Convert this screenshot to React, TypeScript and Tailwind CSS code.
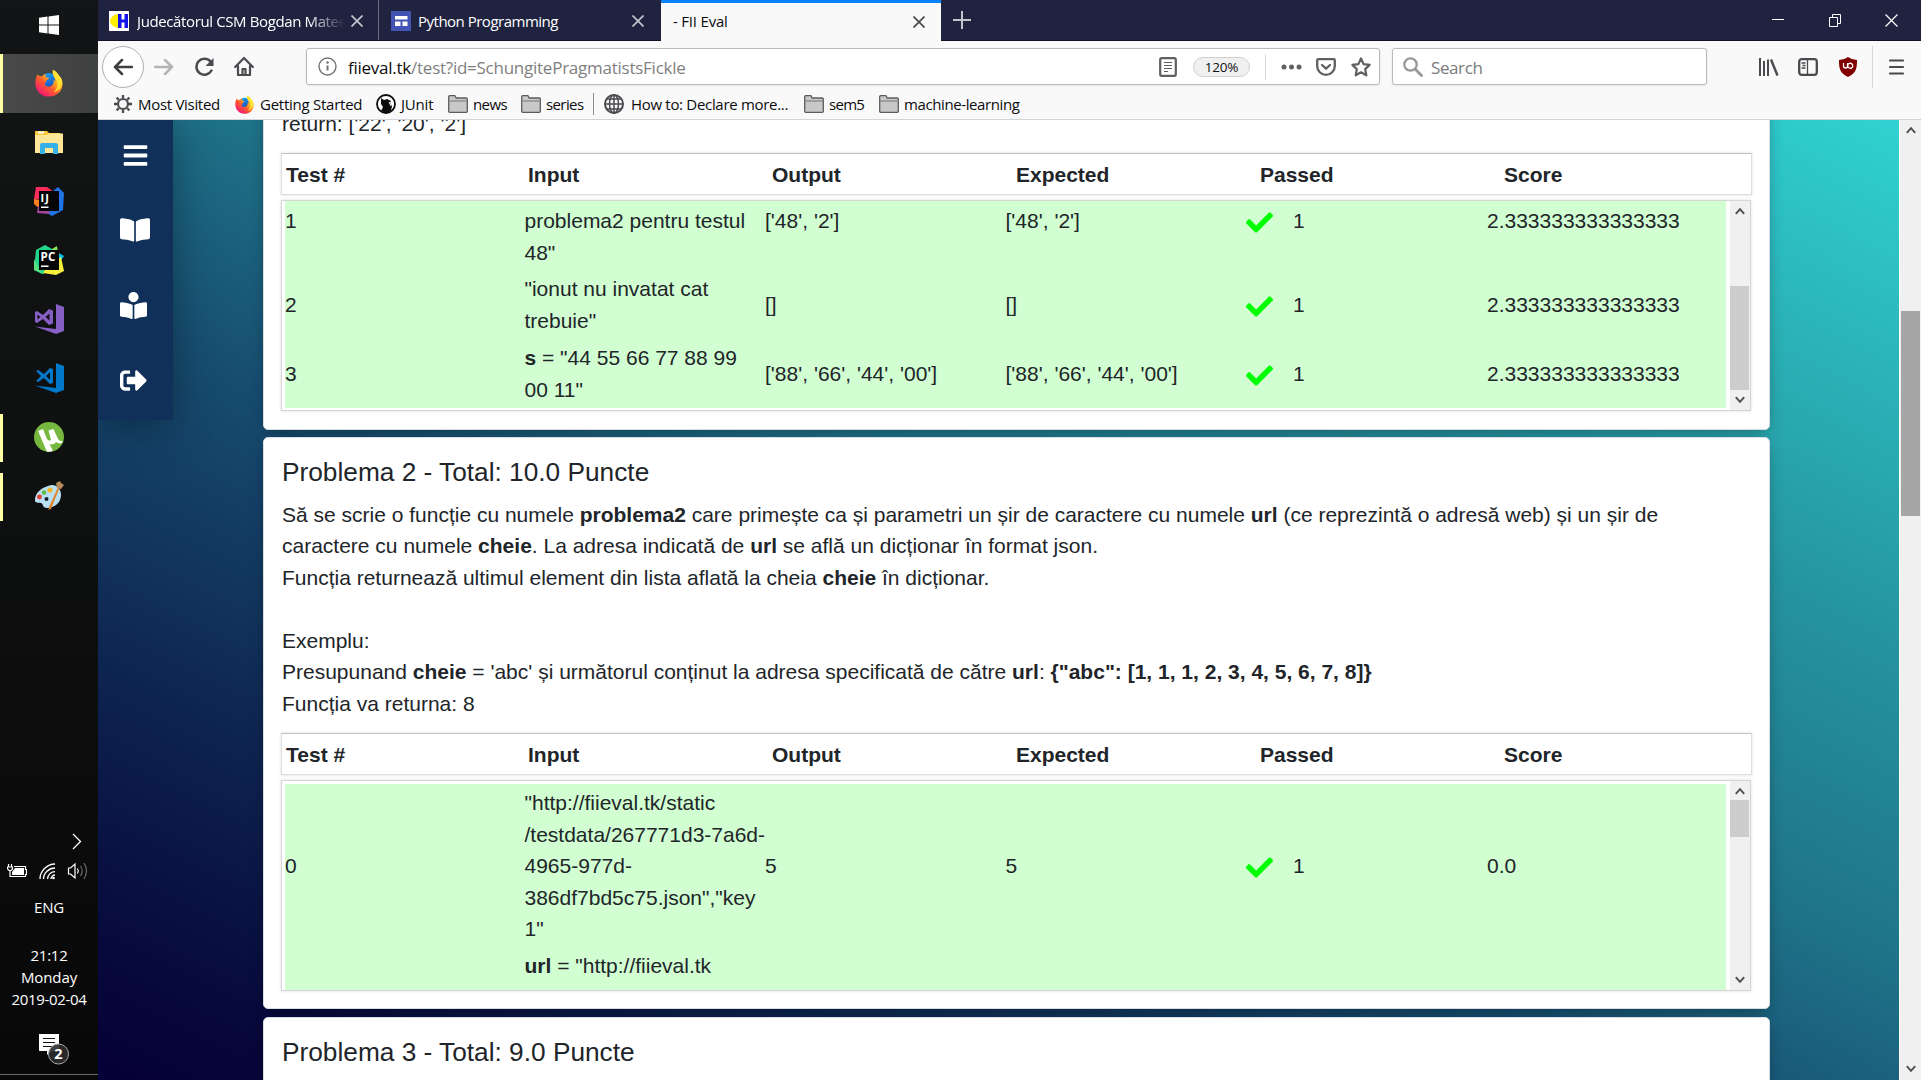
import React from "react";
import { FaBars, FaBookOpen, FaBookReader, FaSignOutAlt, FaCheck } from "react-icons/fa";

const SEGOE = "font-['Open_Sans','Noto_Sans',sans-serif]";

function Firefox({ size }: { size: number }) {
  const id = "fx" + size;
  return (
    <svg width={size} height={size} viewBox="0 0 32 32">
      <defs>
        <linearGradient id={id + "a"} x1="0.9" y1="0.1" x2="0.2" y2="0.95">
          <stop offset="0" stopColor="#fff44f" />
          <stop offset="0.35" stopColor="#ffb01f" />
          <stop offset="0.6" stopColor="#ff5a2c" />
          <stop offset="1" stopColor="#f0147a" />
        </linearGradient>
        <linearGradient id={id + "b"} x1="0.2" y1="0" x2="0.6" y2="1">
          <stop offset="0" stopColor="#1aa7f5" />
          <stop offset="1" stopColor="#1b3fb5" />
        </linearGradient>
      </defs>
      <circle cx="16" cy="15" r="10.5" fill={`url(#${id}b)`} />
      <path d="M3 6c1 2 3 2.500 5 2.500 1-1.500 2.500-2.500 4.500-3-1 1.500-1 3 .5 4l3 .8c-.2 1.600-2 2-3.200 3 .4 2-1.800 2.200-1.500 4.200.8 3 5 3.500 7.500 1.500 2.500-1.800 3-4 2.500-6.500 1 .5 1.500 1 2 2 .3-5-4-7-3-13.500C24 1.500 26 5 28 8c2.500 3 3.500 5 3.500 9.500C31 26 24.500 31.500 16 31.500 7 31.500.8 25 .5 17 .4 13 1 9 3 6z" fill={`url(#${id}a)`} />
      <path d="M23.500 10.500c4 5 2.500 13-3 16.500 8-2 11-8 10-14.500C29.500 8 23 6 20.800 1.500c-1 5 .7 6 2.700 9z" fill="#ffe535" opacity="0.85" />
    </svg>
  );
}

function Tile({ children, active, running }: { children: React.ReactNode; active?: boolean; running?: boolean }) {
  return (
    <div className={"flex h-[59px] w-full items-center " + (active ? "bg-gradient-to-r from-[#4a4a4a] to-[#3f4040]" : "")}>
      <div className={"w-[3px] " + (active ? "h-full bg-[#ffffa6]" : running ? "h-12 bg-[#ffffa6]" : "h-12")} />
      <div className="flex flex-1 justify-center pr-[3px] pb-[2px]">{children}</div>
    </div>
  );
}

function JetBrains({ label, py }: { label: string; py?: boolean }) {
  return (
    <svg width="30" height="30" viewBox="0 0 30 30">
      {py ? (
        <>
          <path d="M2 5l9-5 7 4-2 22-8 3-8-4z" fill="#21d789" />
          <path d="M18 4l5-3 1 7-8 2z" fill="#8be55a" />
          <path d="M23 7l7 4-4 6z" fill="#07c3f2" />
          <path d="M27 12l3 14-8 4-13-2 3-5z" fill="#f5f03c" />
          <path d="M0 14l6 12 5 3-11-4z" fill="#5ee07f" />
        </>
      ) : (
        <>
          <path d="M2 1h11l7 5-6 8L0 13z" fill="#fe2d5d" />
          <path d="M0 13l6 1v9l-6-5z" fill="#fc801d" />
          <path d="M19 5l5-4 6 6-1 17-11 6-8-5z" fill="#2173e8" />
          <path d="M4 20l10 3 2 5-13-1z" fill="#a0479a" />
        </>
      )}
      <rect x="5" y="5" width="20" height="20" fill="#060606" />
      <text x="6.500" y="16" fontSize={py ? 11.5 : 11} fontWeight="700" fill="#fff" fontFamily="Open Sans, sans-serif" letterSpacing={py ? 0.3 : 1.2}>{label}</text>
      <rect x="7" y="20.500" width="7.500" height="1.500" fill="#fff" />
    </svg>
  );
}

function VisualStudio({ color, code }: { color: string; code?: boolean }) {
  return (
    <svg width="30" height="30" viewBox="0 0 30 30" fill={color}>
      <path d="M22 0l8 3v24l-8 3L1 22.500l21 2.500z" />
      {code ? (
        <path fillRule="evenodd" d="M2 8l2-1 6 4 6-6 3 1v14l-3 1-6-6-6 4-2-1 5-5zM16 9l-4 4 4 4z" />
      ) : (
        <path fillRule="evenodd" d="M1 8l2-1 6 4 6-6 4 1.500v13L15 21l-6-6-6 4-2-1zM3.500 10.500v5L6.500 13zM15.500 9.500L11.500 13l4 3.500z" />
      )}
    </svg>
  );
}

function Taskbar() {
  return (
    <aside className="flex h-full w-[98px] shrink-0 flex-col items-center bg-gradient-to-b from-[#131415] via-[#0e0f0f] to-[#080808] text-white">
      <div className="flex h-[54px] items-center pb-1">
        <svg width="20" height="20" viewBox="0 0 20 20" fill="#fff">
          <path d="M0 2.800l8.500-1.200v7.900H0zM9.500 1.400L20 0v9.500H9.500zM0 10.500h8.500v7.900L0 17.200zM9.500 10.500H20V20L9.500 18.600z" />
        </svg>
      </div>
      <Tile active><Firefox size={28} /></Tile>
      <Tile>
        <svg width="28" height="24" viewBox="0 0 28 24">
          <path d="M0 1h12l2 2h11v4H0z" fill="#fcc93a" />
          <path d="M3 1.500h6v2H3z" fill="#fff" />
          <path d="M0 5h12l2-1.500h14V23H0z" fill="#ffe698" />
          <path d="M5 24V15q0-2 2-2h14q2 0 2 2v9h-5v-6h-8v6z" fill="#38b1e6" />
        </svg>
      </Tile>
      <Tile><JetBrains label="IJ" /></Tile>
      <Tile><JetBrains label="PC" py /></Tile>
      <Tile><VisualStudio color="#865fc5" /></Tile>
      <Tile><VisualStudio color="#0179cb" code /></Tile>
      <Tile running>
        <svg width="30" height="30" viewBox="0 0 30 30">
          <circle cx="15" cy="15" r="15" fill="#76b83f" />
          <path d="M4 9l5-2 4 10q2 2.500 4 1L14.500 8.500l5-1.500 4.500 10q2 3 4 1.500l.5 2q-3 2-6.500-.5-2 3.500-6.500 2l3.500 7q-2 1-6 .8z" fill="#fff" />
        </svg>
      </Tile>
      <Tile running>
        <svg width="30" height="30" viewBox="0 0 30 30">
          <path d="M14 5C21 2 27 7 27 14c0 8-7 13-14 13-5 0-3-4-6-5s-6 1-6-3C1 12 7 7 14 5z" fill="#b9dff2" />
          <circle cx="12.500" cy="18" r="2" fill="#15202a" />
          <circle cx="5.500" cy="16" r="2.400" fill="#e5432f" />
          <circle cx="10" cy="11.500" r="2.300" fill="#62b944" />
          <circle cx="16" cy="9" r="2.600" fill="#f6b62b" />
          <path d="M24 6l1.500 1L17 28l-2.500 1 1-4z" fill="#e0862d" />
          <path d="M22 2l4-2 1 2 3 2-3 4-4-1z" fill="#b98a5a" />
        </svg>
      </Tile>
      <div className="flex-1" />
      <div className={"flex w-full flex-col items-center text-[15px] leading-[22px] " + SEGOE}>
        <svg className="mb-[11.500px] ml-[56px]" width="10" height="17" viewBox="0 0 10 17" fill="none" stroke="#fff" strokeWidth="1.300"><path d="M1 1l7.500 7.500L1 16" /></svg>
        <div className="flex h-5 w-full items-center gap-3 pl-[7px]">
          <svg width="20" height="16" viewBox="0 0 20 16">
            <path d="M1.500 1v3M4.500 1v3M0.500 4h5v2l-1.500 1.500h-2L.5 6zM3 8v5.500h15.500v-2h1v-5h-1v-3H7" fill="none" stroke="#fff" strokeWidth="1.200" />
            <path d="M5 9l3-4h9v7H5z" fill="#fff" />
          </svg>
          <svg width="17" height="17" viewBox="0 0 17 17" fill="none" stroke="#fff" strokeWidth="1.300">
            <path d="M1 16C1 8 8 1 16 1M4.500 16C4.500 10 10 5 16 5M8.500 16c0-4 3.500-7.300 7.500-7.300M12 16c0-2 2-4 4-4" />
            <circle cx="14.500" cy="15" r="1.300" fill="#fff" stroke="none" />
          </svg>
          <svg className="-ml-px" width="22" height="20" viewBox="0 0 22 20" fill="none" stroke="#fff" strokeWidth="1.200">
            <path d="M1.500 7v6h2l4.500 4V3L3.500 7zM10.500 7.500q1.500 2.500 0 5" />
            <path d="M13.500 5q3.500 5 0 10M17 2q5 8 0 16" stroke="#6b6b6b" />
          </svg>
        </div>
        <div className="mt-[15px] tracking-[-0.2px]">ENG</div>
        <div className="mt-[26px] tracking-[-0.2px]">21:12</div>
        <div className="tracking-[-0.1px]">Monday</div>
        <div className="tracking-[-0.35px]">2019-02-04</div>
        <svg className="mt-[23px] ml-[10px]" width="30" height="32" viewBox="0 0 30 32">
          <path d="M0 1h20v17H12l-4 4v-4H0z" fill="#fff" />
          <path d="M4 5.500h12M4 9.500h12M4 13.500h9" stroke="#111" strokeWidth="1.200" />
          <circle cx="19.500" cy="21" r="10" fill="#2c2c2c" fillOpacity="0.9" stroke="#a8a8a8" strokeWidth="1" />
          <text x="19.500" y="26" textAnchor="middle" fontSize="14.500" fontWeight="700" fill="#fff" fontFamily="Open Sans, sans-serif">2</text>
        </svg>
        <div className="mt-[9px] h-[6px] w-full border-t border-[#6a6a6a]" />
      </div>
    </aside>
  );
}

function X({ color, size = 12, w = 1.7 }: { color: string; size?: number; w?: number }) {
  return (
    <svg width={size} height={size} viewBox="0 0 12 12" stroke={color} strokeWidth={w}><path d="M.5.5l11 11M11.500.5l-11 11" /></svg>
  );
}

function TabStrip() {
  return (
    <div className="flex h-[41px] shrink-0 border-b border-[#0f1126] bg-[#202340] text-[15px] text-white">
      <div className="flex w-[281px] items-center border-r border-[#6b6d80] pt-[2px] pl-[11px]">
        <svg width="20" height="20" viewBox="0 0 20 20">
          <rect width="20" height="20" fill="#fff" />
          <path d="M9 3v14C4 16 1 13 1 10s3-6 8-7z" fill="#ffee00" />
          <path d="M9 3h3.500v5.500h3V3H19v14h-3.500v-5.500h-3V17H9z" fill="#1414e6" />
        </svg>
        <div className="ml-2 w-[208px] overflow-hidden whitespace-nowrap tracking-[-0.38px] [mask-image:linear-gradient(to_right,#000_82%,transparent)]">Judecătorul CSM Bogdan Mateescu</div>
        <div className="ml-[6px]"><X color="#c3c4ce" /></div>
      </div>
      <div className="flex w-[282px] items-center pt-[2px] pl-3">
        <svg width="20" height="20" viewBox="0 0 20 20">
          <rect width="20" height="20" fill="#4154b3" />
          <path d="M4 5h12.500v3.500H4zM4 10.500h5.500V15H4zM11.500 10.500h5V15h-5z" fill="#fff" />
        </svg>
        <div className="ml-[7px] w-[214px] tracking-[-0.5px]">Python Programming</div>
        <X color="#c3c4ce" />
      </div>
      <div className="-mb-px flex w-[280px] items-center border-t-[3px] border-[#0a84ff] bg-[#f9f9fa] pb-px pl-3 text-[#0c0c0d]">
        <div className="w-[240px] tracking-[-0.2px]">- FII Eval</div>
        <X color="#4a4a4f" />
      </div>
      <div className="flex flex-1 items-center pl-3">
        <svg width="18" height="18" viewBox="0 0 18 18" stroke="#c3c4ce" strokeWidth="2"><path d="M9 0v18M0 9h18" /></svg>
        <div className="ml-auto flex items-center pr-[23px]">
          <svg width="12" height="12" viewBox="0 0 12 12"><path d="M0 5h12v1H0z" fill="#fff" /></svg>
          <svg className="ml-[45px] mr-[44px]" width="12" height="13" viewBox="0 0 12 13" fill="none" stroke="#fff"><path d="M.5 3.500h8v9h-8zM3.500 3V.5h8v9H9" /></svg>
          <X color="#fff" size={13} w={1.1} />
        </div>
      </div>
    </div>
  );
}

function Toolbar() {
  return (
    <div className="flex h-[51px] shrink-0 items-center pl-1">
      <div className="flex size-[42px] items-center justify-center rounded-full border border-[#b0b0b2] bg-white">
        <svg width="20" height="18" viewBox="0 0 20 18" fill="none" stroke="#3e3d40" strokeWidth="2.500" strokeLinecap="round" strokeLinejoin="round"><path d="M19 9H2M9 2L2 9l7 7" /></svg>
      </div>
      <svg className="ml-[10px]" width="20" height="18" viewBox="0 0 20 18" fill="none" stroke="#b4b4b6" strokeWidth="2.500" strokeLinecap="round" strokeLinejoin="round"><path d="M1 9h17M11 2l7 7-7 7" /></svg>
      <svg className="ml-[21px]" width="20" height="20" viewBox="0 0 20 20" fill="none" stroke="#4a4a4f" strokeWidth="2.500"><path d="M16.500 13.500A8 8 0 1 1 15.500 4.500" strokeLinecap="round" /><path d="M18.500 1v8h-8z" fill="#4a4a4f" stroke="none" /></svg>
      <svg className="ml-[19px]" width="20" height="21" viewBox="0 0 20 21" fill="none" stroke="#4a4a4f" strokeWidth="2.200" strokeLinejoin="round" strokeLinecap="round"><path d="M1.200 11L10 2l8.800 9M4 10v9h12v-9" /><path d="M8.500 19v-6h3v6" /></svg>

      <div className="ml-[52px] flex h-[37px] w-[1074px] items-center rounded-[3px] border border-[#b9b9ba] bg-white pl-[11px] shadow-[0_1px_3px_rgba(0,0,0,0.08)]">
        <svg width="19" height="19" viewBox="0 0 19 19" fill="none" stroke="#737373" strokeWidth="1.400"><circle cx="9.500" cy="9.500" r="8.500" /><path d="M9.500 8.500v5" strokeWidth="2" /><circle cx="9.500" cy="5.500" r="1.300" fill="#737373" stroke="none" /></svg>
        <div className="ml-[11px] w-[811px] pt-[2px] text-[17px] tracking-[-0.25px] text-[#7f7f80]"><span className="text-[#0c0c0d]">fiieval.tk</span>/test?id=SchungitePragmatistsFickle</div>
        <svg width="18" height="20" viewBox="0 0 18 20" fill="none" stroke="#606064"><rect x="1.200" y="1.200" width="15.600" height="17.600" rx="1.500" strokeWidth="2.200" /><path d="M5 5.500h8M5 8.500h8M5 11.500h8M5 14.500h4" strokeWidth="1.200" /></svg>
        <div className="ml-4 flex h-5 w-[57px] items-center justify-center rounded-full border border-[#d0d0d0] bg-[#f0f0f1] pt-px text-[13.500px] tracking-[-0.2px] text-[#111]">120%</div>
        <div className="ml-[15px] h-[26px] w-px bg-[#dadadb]" />
        <svg className="ml-[15px]" width="21" height="6" viewBox="0 0 21 6" fill="#606064"><circle cx="3" cy="3" r="2.500" /><circle cx="10.500" cy="3" r="2.500" /><circle cx="18" cy="3" r="2.500" /></svg>
        <svg className="ml-[14px]" width="20" height="18" viewBox="0 0 20 18" fill="none" stroke="#606064" strokeWidth="2.300" strokeLinejoin="round" strokeLinecap="round"><path d="M1.200 2.200q0-1 1-1h15.600q1 0 1 1V8a8.800 8.800 0 0 1-17.600 0z" /><path d="M6 7l4 3.700L14 7" /></svg>
        <svg className="ml-[15px]" width="20" height="20" viewBox="0 0 20 20" fill="none" stroke="#606064" strokeWidth="2.200" strokeLinejoin="round"><path d="M10 1.500l2.600 5.600 6 .8-4.400 4.200 1.100 6.200L10 15.300l-5.300 3 1.100-6.200L1.400 7.900l6-.8z" /></svg>
      </div>
      <div className="ml-3 flex h-[37px] w-[315px] items-center rounded-[3px] border border-[#b9b9ba] bg-white pl-[10px] shadow-[0_1px_3px_rgba(0,0,0,0.08)]">
        <svg width="20" height="20" viewBox="0 0 20 20" fill="none" stroke="#98989a"><circle cx="7.500" cy="7.500" r="6.200" strokeWidth="2.300" /><path d="M12 12l7.500 7.500" strokeWidth="2.800" /></svg>
        <div className="ml-[8px] pt-[2px] text-[17px] tracking-[-0.4px] text-[#7b7b7d]">Search</div>
      </div>
      <svg className="ml-[52px]" width="20" height="18" viewBox="0 0 20 18" stroke="#4a4a4f" strokeWidth="2"><path d="M1 0v18M5 3v15M9 1.500V18" /><path d="M12 1.500l6.500 16" strokeWidth="2.400" /></svg>
      <svg className="ml-[19px]" width="20" height="18" viewBox="0 0 20 18" fill="none" stroke="#4a4a4f"><rect x="1.200" y="1.200" width="17.600" height="15.600" rx="2.500" strokeWidth="2.300" /><path d="M9.500 1v16M3.500 5h4M4.500 7.500h3M3.500 10h4" strokeWidth="1.300" /></svg>
      <svg className="ml-[21px]" width="18" height="20" viewBox="0 0 18 20"><path d="M9 0q4 3 9 3c0 9-1 13-9 17C1 16 0 12 0 3q5 0 9-3z" fill="#800000" /><path d="M4.500 6v3q0 2 2 2t2-2V6M8.800 9V8.500a2.500 2.500 0 1 1 0 .5" fill="none" stroke="#fff" strokeWidth="1.300" /></svg>
      <div className="ml-[15px] h-[42px] w-px bg-[#d7d7db]" />
      <svg className="ml-4" width="15" height="16" viewBox="0 0 15 16" stroke="#4a4a4f" strokeWidth="2.200" strokeLinecap="round"><path d="M1 1.500h13M1 8h13M1 14.500h13" /></svg>
    </div>
  );
}

function Folder() {
  return (
    <svg className="shrink-0" width="20" height="18" viewBox="0 0 20 18" fill="#c8c8c8" stroke="#5c5c60" strokeWidth="1.300"><path d="M.7 16.500V1.700q0-1 1-1h4.600q1 0 1.300 1l.5 1.300h10.200q1 0 1 1v12.500q0 .8-1 .8H1.700q-1 0-1-.8z" /><path d="M.7 6h18.600" stroke="#88888a" /></svg>
  );
}

function Bookmarks() {
  return (
    <div className="flex h-[26px] shrink-0 items-center pb-[2px] text-[15px] text-[#0c0c0d]">
      <div className="flex w-[130px] items-center gap-[6px] pl-4 tracking-[-0.3px] whitespace-nowrap">
        <svg className="shrink-0" width="18" height="18" viewBox="0 0 18 18" fill="none" stroke="#4a4a4f"><circle cx="9" cy="9" r="5" strokeWidth="2.200" /><path d="M9 0v3M9 15v3M0 9h3M15 9h3M2.600 2.600l2.200 2.200M13.200 13.200l2.200 2.200M2.600 15.400l2.200-2.200M13.200 4.800l2.200-2.200" strokeWidth="2.300" /></svg>
        Most Visited
      </div>
      <div className="flex w-[140px] items-center gap-[6px] pl-[7px] tracking-[-0.25px] whitespace-nowrap"><Firefox size={19} />Getting Started</div>
      <div className="flex w-[78px] items-center gap-[5px] pl-2 tracking-[-0.2px]">
        <svg width="20" height="20" viewBox="0 0 20 20"><circle cx="10" cy="10" r="9" fill="#fff" stroke="#0c0c0d" strokeWidth="1.800" /><path d="M5 4l3 2 3-1 4 2-1 2 2 3-1 5-5 2-5-2 2-4-2-3z" fill="#0c0c0d" /><path d="M13 8l2 4" stroke="#fff" strokeWidth="1" /></svg>
        JUnit
      </div>
      <div className="flex w-[73px] items-center gap-[5px] pl-[2px] tracking-[-0.6px]"><Folder />news</div>
      <div className="flex w-[74px] items-center gap-[5px] pl-[2px] tracking-[-0.6px]"><Folder />series</div>
      <div className="h-[22px] w-px bg-[#8b8b8d]" />
      <div className="flex w-[210px] items-center gap-[7px] pl-[10px] tracking-[-0.31px] whitespace-nowrap">
        <svg className="shrink-0" width="20" height="20" viewBox="0 0 20 20" fill="none" stroke="#4a4a4f" strokeWidth="1.500"><circle cx="10" cy="10" r="9" strokeWidth="2" /><ellipse cx="10" cy="10" rx="4.500" ry="9" /><path d="M10 1v18M1 10h18M3 5h14M3 15h14" /></svg>
        How to: Declare more...
      </div>
      <div className="flex w-[75px] items-center gap-[5px] tracking-[-0.7px]"><Folder />sem5</div>
      <div className="flex items-center gap-[5px] tracking-[-0.4px] whitespace-nowrap"><Folder />machine-learning</div>
    </div>
  );
}

function Chevron({ down }: { down?: boolean }) {
  return (
    <svg width="10" height="8" viewBox="0 0 10 8" fill="none" stroke="#505050" strokeWidth="2"><path d={down ? "M.8 1.200L5 5.800l4.200-4.600" : "M.8 6.800L5 2.200l4.200 4.600"} /></svg>
  );
}

function HeaderRow() {
  return (
    <div className="-ml-px grid h-[42px] w-[1471px] grid-cols-[242px_244px_244px_244px_244px_1fr] items-center border border-[#dedede] border-t-[#c2c2c2] pt-[2px] pl-1 font-bold shadow-[0_0_3px_rgba(0,0,0,0.14)]">
      {["Test #", "Input", "Output", "Expected", "Passed", "Score"].map((h) => <div key={h}>{h}</div>)}
    </div>
  );
}

function Row({ id, input, out, score, className }: { id: string; input: React.ReactNode; out: string; score: string; className: string }) {
  return (
    <div className={"grid w-[1441px] shrink-0 grid-cols-[239.500px_240.500px_240.500px_240.500px_241px_1fr] bg-[#d1ffd1] " + className}>
      <div>{id}</div>
      <div className="whitespace-nowrap">{input}</div>
      <div>{out}</div>
      <div>{out}</div>
      <div className="flex h-[31px] items-center gap-[20px]">{score && <FaCheck className="mt-[3px] text-[#00ff00]" size={27} />}{score && "1"}</div>
      <div>{score}</div>
    </div>
  );
}

function ResultBox({ children, thumb }: { children: React.ReactNode; thumb: string }) {
  return (
    <div className="mt-[5px] -ml-px flex h-[211px] w-[1470px] justify-between border border-[#d6d6d6] pl-[3px] shadow-[0_0_3px_rgba(0,0,0,0.14)]">
      <div className="flex h-full flex-col overflow-hidden">{children}</div>
      <div className="flex h-full w-[20px] flex-col items-center justify-between bg-[#f0f0f0] pt-[6px] pr-px pb-[6px]">
        <Chevron />
        <div className={"flex w-full flex-1 flex-col " + thumb}><div className="w-full flex-1 bg-[#cdcdcd]" /></div>
        <Chevron down />
      </div>
    </div>
  );
}

const CARD = "w-[1507px] shrink-0 rounded-[5px] border border-[#d9dde0] bg-white px-[18px] shadow-[0_4px_16px_-5px_rgba(0,0,0,0.45)]";

function Page() {
  return (
    <div className="flex min-h-0 flex-1 overflow-hidden">
      <main className="flex min-w-0 flex-1 items-start bg-[linear-gradient(27deg,#050038_0%,#07083b_7%,#0e2450_22%,#174f72_42%,#1f7389_55%,#25949f_72%,#30d2d2_100%)] font-['Liberation_Sans',Arial,sans-serif] text-[21px] leading-[31.500px] text-[#212529]">
        <nav className="flex h-[300px] w-[75px] shrink-0 flex-col items-center bg-[#113059] text-white shadow-[0_5px_40px_rgba(0,0,0,0.35)]">
          <div className="flex h-[70px] items-center"><FaBars size={27} /></div>
          <div className="flex h-[80px] items-center pr-px"><FaBookOpen size={30} /></div>
          <div className="flex h-[71px] items-center pr-1"><FaBookReader size={27} /></div>
          <div className="flex h-[78px] items-center pr-1"><FaSignOutAlt size={27} /></div>
        </nav>
        <div className="ml-[90px] flex flex-col gap-[7.500px]">
          <section className={CARD + " -mt-[30px] h-[339.500px] pt-[17px]"}>
            <p>return: ['22', '20', '2']</p>
            <div className="mt-[13.500px]"><HeaderRow /></div>
            <ResultBox thumb="pt-[71px] pb-[6px]">
              <Row className="h-[69px] pt-[4px]" id="1" input={<>problema2 pentru testul<br />48"</>} out="['48', '2']" score="2.333333333333333" />
              <Row className="h-[69px] items-center" id="2" input={<>"ionut nu invatat cat<br />trebuie"</>} out="[]" score="2.333333333333333" />
              <Row className="h-[69px] items-center" id="3" input={<><b>s</b> = "44 55 66 77 88 99<br />00 11"</>} out="['88', '66', '44', '00']" score="2.333333333333333" />
            </ResultBox>
          </section>
          <section className={CARD + " h-[572px] pt-[19px]"}>
            <h2 className="text-[26.250px] leading-[31px]">Problema 2 - Total: 10.0 Puncte</h2>
            <div className="mt-[10.500px] mb-[14px] whitespace-nowrap">
              <p>Să se scrie o funcție cu numele <b>problema2</b> care primește ca și parametri un șir de caractere cu numele <b>url</b> (ce reprezintă o adresă web) și un șir de</p>
              <p>caractere cu numele <b>cheie</b>. La adresa indicată de <b>url</b> se află un dicționar în format json.</p>
              <p>Funcția returnează ultimul element din lista aflată la cheia <b>cheie</b> în dicționar.</p>
              <br />
              <p>Exemplu:</p>
              <p>Presupunand <b>cheie</b> = 'abc' și următorul conținut la adresa specificată de către <b>url</b>: <b>{'{"abc": [1, 1, 1, 2, 3, 4, 5, 6, 7, 8]}'}</b></p>
              <p>Funcția va returna: 8</p>
            </div>
            <HeaderRow />
            <ResultBox thumb="pt-[5px] pb-[139px]">
              <div className="h-[3px] shrink-0" />
              <Row className="h-[163.500px] items-center" id="0" input={<>"http://fiieval.tk/static<br />/testdata/267771d3-7a6d-<br />4965-977d-<br />386df7bd5c75.json","key<br />1"</>} out="5" score="0.0" />
              <Row className="h-[60px] pt-[2px]" id="" input={<><b>url</b> = "http://fiieval.tk</>} out="" score="" />
            </ResultBox>
          </section>
          <section className={CARD + " h-[120px] pt-[19px]"}>
            <h2 className="text-[26.250px] leading-[31px]">Problema 3 - Total: 9.0 Puncte</h2>
          </section>
        </div>
      </main>
      <div className="flex w-[22px] shrink-0 flex-col items-center border-l border-white bg-[#f0f0f0] pt-[6px] pb-[7px]">
        <Chevron />
        <div className="mt-[177px] h-[205px] w-[19px] bg-[#a6a6a6]" />
        <div className="flex-1" />
        <Chevron down />
      </div>
    </div>
  );
}

export default function App() {
  return (
    <div className="flex h-[1080px] w-[1921px] overflow-hidden bg-black">
      <Taskbar />
      <div className="flex min-w-0 flex-1 flex-col">
        <div className={"flex h-[120px] shrink-0 flex-col border-b border-[#d4d4d6] bg-[#f9f9fa] " + SEGOE}>
          <TabStrip />
          <Toolbar />
          <Bookmarks />
        </div>
        <Page />
      </div>
    </div>
  );
}
